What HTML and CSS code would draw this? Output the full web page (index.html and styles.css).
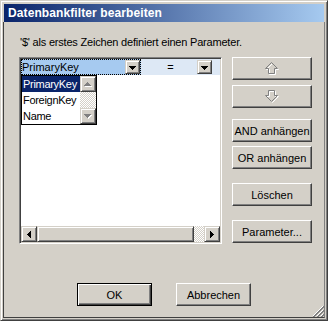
FILE: index.html
```html
<!DOCTYPE html>
<html lang="de">
<head>
<meta charset="utf-8">
<title>Datenbankfilter bearbeiten</title>
<link rel="stylesheet" href="styles.css">
</head>
<body>
<div class="window">
  <div class="titlebar"><span class="title">Datenbankfilter bearbeiten</span></div>
  <div class="client">
    <p class="hint">'$' als erstes Zeichen definiert einen Parameter.</p>
    <div class="main">
      <div class="grid">
        <div class="grid-body">
          <div class="row">
            <div class="cell cell-field">
              <span class="cell-text">PrimaryKey</span>
              <span class="dd-btn"><svg width="7" height="4" viewBox="0 0 7 4"><path d="M0 0H7V1H6V2H5V3H4V4H3V3H2V2H1V1H0Z" fill="#000"/></svg></span>
            </div>
            <div class="cell cell-op">
              <span class="op">=</span>
              <span class="dd-btn"><svg width="7" height="4" viewBox="0 0 7 4"><path d="M0 0H7V1H6V2H5V3H4V4H3V3H2V2H1V1H0Z" fill="#000"/></svg></span>
            </div>
            <div class="cell cell-val"></div>
          </div>
          <div class="dropdown">
            <ul class="dd-items">
              <li class="dd-item selected">PrimaryKey</li>
              <li class="dd-item">ForeignKey</li>
              <li class="dd-item">Name</li>
            </ul>
            <div class="vscroll">
              <span class="sb-btn"><svg width="8" height="5" viewBox="0 0 8 5"><path d="M4 1H5V2H6V3H7V4H8V5H1V4H2V3H3V2H4Z" fill="#fff"/><path d="M3 0H4V1H5V2H6V3H7V4H0V3H1V2H2V1H3Z" fill="#808080"/></svg></span>
              <span class="sb-track"></span>
              <span class="sb-btn"><svg width="8" height="5" viewBox="0 0 8 5"><path d="M1 1H8V2H7V3H6V4H5V5H4V4H3V3H2V2H1Z" fill="#fff"/><path d="M0 0H7V1H6V2H5V3H4V4H3V3H2V2H1V1H0Z" fill="#808080"/></svg></span>
            </div>
          </div>
        </div>
        <div class="hscroll">
          <span class="sb-btn"><svg width="4" height="7" viewBox="0 0 4 7"><path d="M4 0V7H3V6H2V5H1V4H0V3H1V2H2V1H3V0Z" fill="#000"/></svg></span>
          <span class="sb-thumb"></span>
          <span class="sb-track"></span>
          <span class="sb-btn"><svg width="4" height="7" viewBox="0 0 4 7"><path d="M0 0V7H1V6H2V5H3V4H4V3H3V2H2V1H1V0Z" fill="#000"/></svg></span>
        </div>
      </div>
      <div class="side">
        <button class="btn btn-side btn-up" type="button" aria-label="Nach oben">
          <svg width="15" height="14" viewBox="0 0 15 14"><path d="M7.5 1.5L13.5 7.5H10.5V12.5H4.5V7.5H1.5Z" fill="none" stroke="#fff"/><path d="M6.5 0.5L12.5 6.5H9.5V11.5H3.5V6.5H0.5Z" fill="none" stroke="#808080"/></svg>
        </button>
        <button class="btn btn-side btn-down" type="button" aria-label="Nach unten">
          <svg width="15" height="14" viewBox="0 0 15 14"><path d="M7.5 12.5L13.5 6.5H10.5V1.5H4.5V6.5H1.5Z" fill="none" stroke="#fff"/><path d="M6.5 11.5L12.5 5.5H9.5V0.5H3.5V5.5H0.5Z" fill="none" stroke="#808080"/></svg>
        </button>
        <button class="btn btn-side btn-and" type="button">AND anhängen</button>
        <button class="btn btn-side btn-or" type="button">OR anhängen</button>
        <button class="btn btn-side btn-del" type="button">Löschen</button>
        <button class="btn btn-side btn-param" type="button">Parameter...</button>
      </div>
    </div>
    <div class="footer">
      <button class="btn btn-foot btn-default" type="button">OK</button>
      <button class="btn btn-foot" type="button">Abbrechen</button>
    </div>
    <svg class="grip" width="12" height="12" viewBox="0 0 12 12">
      <path d="M11 1L1 11M11 5L5 11M11 9L9 11" stroke="#fff" stroke-width="1"/>
      <path d="M12 1L1 12M12 2L2 12M12 5L5 12M12 6L6 12M12 9L9 12M12 10L10 12" stroke="#808080" stroke-width="1"/>
    </svg>
  </div>
</div>
</body>
</html>
```
FILE: styles.css
```css
* { box-sizing: border-box; }
html, body { margin: 0; padding: 0; background: #d4d0c8; }
body {
  font-family: "Liberation Sans", Arial, sans-serif;
  font-size: 11px;
  color: #000;
}
.window {
  width: 328px;
  height: 321px;
  background: #d4d0c8;
  border: 1px solid;
  border-color: #d4d0c8 #404040 #404040 #d4d0c8;
  box-shadow: inset 1px 1px #fff, inset -1px -1px #808080;
  padding: 3px 2px 2px 2px;
  display: flex;
  flex-direction: column;
}
.titlebar {
  height: 18px;
  flex: none;
  margin: 0 1px 0 1px;
  background: linear-gradient(to right, #0a246a, #a6caf0);
  display: flex;
  align-items: center;
  padding-left: 4px;
}
.title {
  color: #fff;
  font-weight: bold;
  font-size: 12px;
  letter-spacing: 0.1px;
}
.client {
  flex: 1;
  position: relative;
  border-left: 1px solid #404040;
  border-right: 1px solid #808080;
  border-bottom: 1px solid #404040;
  padding: 14px 0 0 15px;
  display: flex;
  flex-direction: column;
}
.hint {
  margin: 0;
  line-height: 13px;
  letter-spacing: -0.2px;
  padding-left: 1px;
}
.main {
  margin-top: 8px;
  display: flex;
  align-items: flex-start;
}
.grid {
  width: 203px;
  height: 187px;
  border: 1px solid;
  border-color: #808080 #fff #fff #808080;
  box-shadow: inset 1px 1px #404040, inset -1px -1px #d4d0c8;
  padding: 1px;
  background: #fff;
  display: flex;
  flex-direction: column;
}
.grid-body {
  flex: 1;
  position: relative;
}
.row {
  height: 16px;
  display: flex;
  background: #dde8f5;
}
.cell {
  height: 16px;
  display: flex;
  align-items: center;
}
.cell-field {
  width: 120px;
  background: #a6caf0;
  outline: 1px dotted #000;
  outline-offset: -1px;
  padding-left: 1px;
}
.cell-text { flex: 1; }
.cell-op {
  width: 72px;
  padding-left: 1px;
}
.op { flex: 1; text-align: center; padding-left: 2px; }
.cell-val { flex: 1; }
.dd-btn {
  width: 15px;
  height: 14px;
  margin-right: 1px;
  background: #d4d0c8;
  border: 1px solid;
  border-color: #d4d0c8 #404040 #404040 #d4d0c8;
  box-shadow: inset 1px 1px #fff, inset -1px -1px #808080;
  display: flex;
  align-items: center;
  justify-content: center;
}
.dd-btn svg { display: block; margin-top: 1px; }
.dropdown {
  position: absolute;
  left: 0;
  top: 16px;
  width: 76px;
  height: 50px;
  border: 1px solid #000;
  background: #fff;
  display: flex;
}
.dd-items {
  list-style: none;
  margin: 0;
  padding: 0;
  flex: 1;
}
.dd-item {
  height: 16px;
  line-height: 16px;
  padding-left: 1px;
  letter-spacing: -0.3px;
  white-space: nowrap;
  overflow: hidden;
}
.dd-item.selected { background: #0a246a; color: #fff; }
.vscroll {
  width: 16px;
  flex: none;
  display: flex;
  flex-direction: column;
}
.sb-btn {
  flex: none;
  width: 16px;
  height: 16px;
  background: #d4d0c8;
  border: 1px solid;
  border-color: #d4d0c8 #404040 #404040 #d4d0c8;
  box-shadow: inset 1px 1px #fff, inset -1px -1px #808080;
  display: flex;
  align-items: center;
  justify-content: center;
}
.sb-btn svg { display: block; }
.sb-track {
  flex: 1;
  background: repeating-conic-gradient(#d4d0c8 0 25%, #fff 0 50%) 0 0 / 2px 2px;
}
.hscroll {
  height: 16px;
  flex: none;
  display: flex;
}
.sb-thumb {
  width: 157px;
  background: #d4d0c8;
  border: 1px solid;
  border-color: #d4d0c8 #404040 #404040 #d4d0c8;
  box-shadow: inset 1px 1px #fff, inset -1px -1px #808080;
}
.side {
  margin-left: 10px;
  width: 80px;
  display: flex;
  flex-direction: column;
}
.btn {
  font-family: "Liberation Sans", Arial, sans-serif;
  font-size: 11px;
  font-weight: normal;
  color: #000;
  background: #d4d0c8;
  border: 1px solid;
  border-color: #fff #404040 #404040 #fff;
  box-shadow: inset -1px -1px #808080;
  padding: 0;
  display: flex;
  align-items: center;
  justify-content: center;
  height: 23px;
}
.btn svg { display: block; }
.btn-side { width: 80px; }
.btn-down { margin-top: 5px; }
.btn-and { margin-top: 11px; }
.btn-or { margin-top: 4px; }
.btn-del { margin-top: 14px; }
.btn-param { margin-top: 14px; }
.footer {
  margin-top: 39px;
  margin-left: -15px;
  display: flex;
  justify-content: center;
  gap: 24px;
}
.btn-foot { width: 75px; }
.btn-default {
  border-color: #000;
  box-shadow: inset 1px 1px #fff, inset -1px -1px #404040, inset -2px -2px #808080;
}
.grip {
  position: absolute;
  right: 0;
  bottom: 0;
  display: block;
}
```
